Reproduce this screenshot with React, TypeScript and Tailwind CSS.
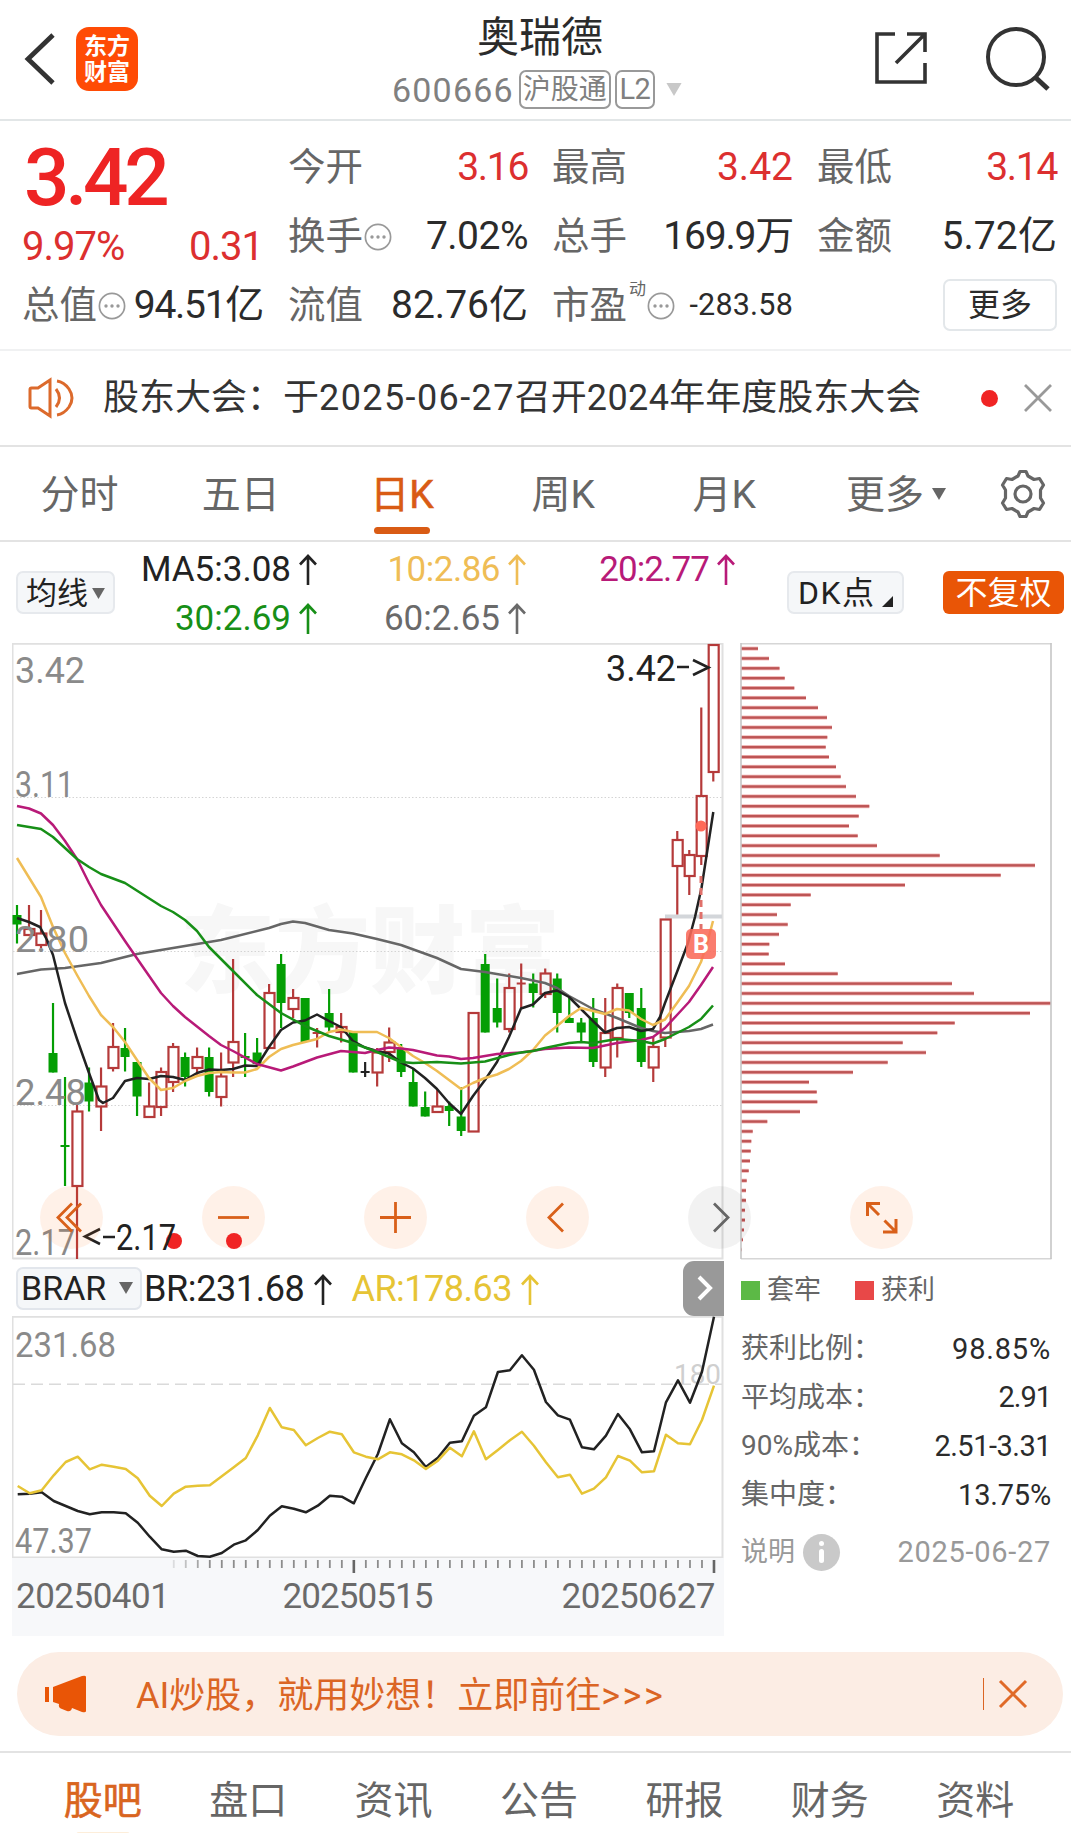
import React from "react";

type Candle = [kind: "r" | "g" | "k", high: number, top: number, bottom: number, low: number];

const STEP = 12.005;
const xAt = (i: number) => 17 + i * STEP;

const candles: Candle[] = [
  ["g", 905, 915, 924.5, 943.5], ["r", 905, 929, 935, 935], ["r", 910, 933.5, 945, 948],
  ["g", 1003, 1053, 1072.5, 1072.5], ["g", 1077, 1146, 1146, 1186], ["r", 1103, 1111.5, 1186, 1259],
  ["g", 1067.5, 1082.5, 1101.5, 1111.5], ["r", 1067.5, 1086.5, 1106.5, 1131], ["r", 1023, 1047, 1068, 1071.5],
  ["g", 1028, 1048, 1057, 1071.5], ["g", 1062, 1062, 1096.5, 1116], ["r", 1082.5, 1106.5, 1117, 1117],
  ["r", 1067.5, 1072, 1107, 1116], ["r", 1043, 1047, 1082, 1092], ["g", 1052.5, 1057, 1077, 1086.5],
  ["r", 1047.5, 1057, 1068, 1077], ["g", 1047.5, 1057, 1092, 1096.5], ["r", 1052.5, 1076.5, 1097, 1106.5],
  ["r", 959, 1042, 1062.5, 1077], ["g", 1033, 1057, 1057, 1077], ["g", 1038, 1052.5, 1064, 1067],
  ["r", 984, 993, 1048, 1048], ["g", 954, 964, 1003, 1028], ["r", 989, 998, 1009, 1018],
  ["g", 998, 998, 1042, 1042], ["r", 1028, 1033, 1033, 1047.5], ["g", 989, 1013, 1027.5, 1031.5],
  ["r", 1013, 1027, 1032, 1042.5], ["g", 1032, 1032, 1072.5, 1072.5], ["k", 1062, 1072, 1072, 1077],
  ["r", 1048, 1052.5, 1072.5, 1086.5], ["r", 1027.5, 1042.5, 1052, 1062], ["g", 1044, 1048, 1072, 1077],
  ["g", 1069, 1082, 1106.5, 1106.5], ["g", 1091.5, 1107, 1116.5, 1116.5], ["r", 1089, 1106.5, 1112, 1112],
  ["g", 1101.5, 1106, 1111, 1126], ["g", 1087, 1116.5, 1131, 1136], ["r", 1013, 1013, 1131.5, 1131.5],
  ["g", 954, 964, 1032.5, 1032.5], ["g", 978.5, 1008, 1022.5, 1027.5], ["r", 973.5, 988, 1029, 1032.5],
  ["r", 963.5, 983.5, 983.5, 1008], ["g", 973.5, 983.5, 993, 1007.5], ["r", 968.5, 973.5, 994, 998],
  ["g", 973.5, 978.5, 1013, 1032.5], ["g", 998, 1018, 1023, 1023], ["g", 1018, 1022.5, 1032.5, 1041],
  ["g", 998, 1018, 1062, 1067], ["r", 998, 1033, 1067.5, 1077], ["r", 983.5, 988, 1038, 1057.5],
  ["g", 993, 993, 1013, 1018], ["g", 988, 1008, 1062, 1067], ["r", 1037, 1047, 1067.5, 1082],
  ["r", 919.5, 919.5, 1037.5, 1047], ["r", 831, 840, 866, 914.5], ["r", 850, 855, 876, 895],
  ["r", 707.5, 796, 856, 865], ["r", 645, 645, 772, 781.5],
];

const ma5 = "17,918 29,922 40,927 47,940 53,955 65,1003 77,1039 89,1073 99,1100 103,1103 113,1098 125,1081 137,1078 149,1079 161,1076 173,1077 185,1080 197,1073 209,1069.5 221,1070 233,1069 245,1065.5 257,1066 269,1047 281,1030 293,1022.5 305,1020.5 317,1014.5 329,1021 341,1027 353,1041 365,1047.5 377,1051 389,1053.5 401,1062.5 413,1068.5 425,1078 437,1089 449,1103 461,1114 473,1096 485,1080 497,1062 509,1037 521,1008.5 533,1004.5 545,993 557,990.5 569,997 581,1009 593,1021 605,1032.5 617,1028 629,1027 641,1031 653,1029 660,1017 665,1003 677,972 688,943 695,917 701.5,888 713.3,812";
const ma10 = "17,858 41,897 53,927 65,953 77,975 89,996 101,1015 113,1027 125,1042 137,1060 149,1078 161,1090 173,1088 185,1081 197,1076 209,1073 221,1072 233,1072.5 245,1072.5 257,1069 269,1057 281,1049 293,1045 305,1042 317,1039 329,1032 341,1029.5 353,1032 377,1032 389,1038 401,1047 413,1056 425,1063 437,1071 461,1089 473,1083 485,1078 497,1074.5 509,1069 521,1061 533,1050 545,1035.5 557,1026 569,1016 581,1008 593,1011 605,1014 617,1009 629,1010.5 641,1019 653,1025 665,1019.5 677,1003 689,986 701,962 708,940 713,921";
const ma20 = "17,806 29,808.5 41,813.5 53,825 65,841 77,859 89,883 101,905 125,941 145,970 161,993 173,1006 185,1017 197,1026.5 209,1036 221,1045 233,1051 257,1064 281,1070.5 293,1066.5 305,1062 317,1057.5 341,1051 353,1052 365,1053 377,1050 389,1047.5 401,1048.5 413,1050 437,1055.5 449,1056.5 461,1059 473,1058 497,1054 521,1052.5 545,1049 569,1047.5 593,1048 617,1043 641,1040 653,1037 665,1028 677,1015 689,1002 701,985 713,967";
const ma30 = "17,825 41,829 53,837 65,848 77,859 89,867 101,874 125,883 161,906 173,912 185,920 197,931 209,947 233,971 257,995 281,1013 305,1026 329,1036 353,1043 377,1052 389,1057 401,1062 413,1063 437,1062 461,1063.5 485,1061.5 509,1055 521,1052.5 533,1051 545,1048 569,1043 581,1042 593,1043 605,1041 617,1039 641,1041 653,1043.5 665,1039 677,1033 689,1027 701,1019 713,1005.5";
const ma60 = "17,974 41,969.5 65,968 101,963 137,954 161,950 221,940 269,928 281,924 293,921.5 305,923 329,930 353,933.5 377,939 401,945 437,958 461,969 485,972 521,978 545,983 557,988 569,996 593,1009 617,1018 641,1028 653,1031 665,1033 689,1031 701,1029 713,1024.5";

const br = [1494.3, 1493.7, 1492.3, 1501, 1506, 1511, 1514.3, 1512.3, 1512.3, 1513.3, 1522.7, 1536.7, 1549.3, 1551.7, 1550.7, 1556, 1556.7, 1553, 1544.7, 1540.3, 1530, 1515.7, 1506.3, 1508.7, 1512.3, 1505.7, 1495.7, 1496.7, 1503.3, 1478, 1454, 1419.3, 1443.3, 1452.3, 1467, 1457.7, 1442.7, 1441.3, 1415.7, 1407.3, 1372, 1370.3, 1355.3, 1369.7, 1402, 1415.3, 1419.7, 1447.3, 1449.3, 1435.7, 1414, 1429.3, 1452.3, 1451.3, 1402.3, 1380.3, 1402.7, 1371.7, 1316.7];
const ar = [1486, 1493.3, 1490.3, 1475.3, 1462, 1456.7, 1469.3, 1464.7, 1466.7, 1469, 1478.3, 1495.7, 1506, 1493.7, 1486.7, 1485.7, 1485.3, 1476.3, 1467.3, 1458, 1435.3, 1408, 1427.3, 1430, 1445.3, 1438, 1431.7, 1434.3, 1452.3, 1456.7, 1459.3, 1452.3, 1454.3, 1460.3, 1469, 1460.7, 1447.7, 1456.3, 1431.3, 1459.3, 1450, 1440.3, 1431.7, 1445.7, 1462.3, 1477.3, 1474.7, 1493.7, 1488.7, 1477.3, 1456, 1460.7, 1472.3, 1471.3, 1434.7, 1443.3, 1444.3, 1420, 1385.7];

const chips = [17, 28, 38.5, 43.7, 53.3, 65, 77, 86, 91, 86.3, 84.7, 88, 95, 99.7, 105, 115, 128.3, 117.7, 108, 116.7, 136, 198.7, 294, 259.7, 164, 69.7, 49.7, 36, 46.7, 38, 28.3, 27.7, 44, 96.7, 211, 233, 310, 289, 213.7, 196.3, 161.7, 185, 146.7, 112, 68, 75.7, 76.3, 59, 26.3, 11.7, 10.3, 9.7, 9, 7.7, 5.7, 5, 5, 4, 4, 3, 2, 1];

const toPoints = (v: number[]) => v.map((y, i) => `${xAt(i) + 0.7},${y}`).join(" ");

const inkOf = { r: "#b53a3a", g: "#049e04", k: "#222222" };

function CandleMark({ c, i }: { c: Candle; i: number }) {
  const [kind, high, top, bottom, low] = c;
  const x = xAt(i);
  const ink = inkOf[kind];
  if (bottom - top < 1)
    return (
      <g stroke={ink} strokeWidth={2.2}>
        <path d={`M${x} ${high}V${low}M${x - 4.5} ${top}H${x + 4.5}`} />
      </g>
    );
  if (kind === "g")
    return (
      <g>
        <path d={`M${x} ${high}V${low}`} stroke={ink} strokeWidth={2.2} />
        <rect x={x - 4.5} y={top} width={9} height={bottom - top} fill={ink} />
      </g>
    );
  return (
    <g stroke={ink} strokeWidth={2.2} fill="none">
      <path d={`M${x} ${high}V${top}M${x} ${bottom}V${low}`} />
      <rect x={x - 4.6} y={top} width={10} height={bottom - top} />
    </g>
  );
}

function Label(p: { x: number; y: number; w: number; size: number; fill: string; children: string }) {
  return (
    <text x={p.x} y={p.y} fontSize={p.size} fill={p.fill} textLength={p.w} lengthAdjust="spacingAndGlyphs">
      {p.children}
    </text>
  );
}

function KChart() {
  return (
    <svg className="block h-[617px] w-[712px]" viewBox="12 643 712 617">
      <text x={180} y={986} fontSize={95} fontWeight={900} fill="#f7f7f7">东方财富</text>
      <path d="M12.5 1259V643.8H722.5V1258.5H12.5" fill="none" stroke="#e0e0e0" strokeWidth={2} />
      {[797.5, 951.5, 1105.5].map((y) => (
        <path key={y} d={`M13 ${y}H722`} stroke="#d4d4d4" strokeWidth={1} strokeDasharray="1.5 2" />
      ))}
      <path d="M665 916.5H722" stroke="#d3d6da" strokeWidth={4} />
      {candles.map((c, i) => (
        <CandleMark key={i} c={c} i={i} />
      ))}
      <g fill="none" strokeWidth={2.5} strokeLinejoin="round">
        <polyline points={ma60} stroke="#666" />
        <polyline points={ma5} stroke="#222" />
        <polyline points={ma10} stroke="#efbd55" />
        <polyline points={ma20} stroke="#b81a78" />
        <polyline points={ma30} stroke="#178f17" />
      </g>
      <Label x={15} y={682.5} w={70} size={37} fill="#8a8a8a">3.42</Label>
      <Label x={15} y={797} w={59} size={37} fill="#8a8a8a">3.11</Label>
      <Label x={15} y={951.5} w={74} size={37} fill="#8a8a8a">2.80</Label>
      <Label x={15} y={1105} w={71} size={37} fill="#8a8a8a">2.48</Label>
      <Label x={15} y={1255} w={60} size={37} fill="#8a8a8a">2.17</Label>
      <circle cx={701} cy={826} r={5.5} fill="#ff6a58" />
      <path d="M701 876V929" stroke="#e0706a" strokeWidth={3} strokeDasharray="7 5" />
      <rect x={686} y={929} width={30} height={30} rx={5} fill="#f96a5a" opacity={0.88} />
      <text x={701} y={953} textAnchor="middle" fontSize={25} fontWeight={700} fill="#fff">B</text>
      <g stroke="#222" strokeWidth={2.6} fill="none">
        <path d="M693 660L708.500 667.500L693 675M677 667H689" />
      </g>
      <Label x={606} y={681} w={70} size={36} fill="#222">3.42</Label>
      <circle cx={174} cy={1241} r={8} fill="#f02424" />
      <path d="M100 1229L85 1236.500L100 1244M103 1237H115" stroke="#222" strokeWidth={2.6} fill="none" />
      <Label x={116} y={1250} w={60} size={36} fill="#222">2.17</Label>
    </svg>
  );
}

function BrarChart() {
  return (
    <svg className="block h-[242px] w-[712px]" viewBox="12 1316 712 242">
      <path d="M12.5 1557.500V1316.800H722.500V1557.500Z" fill="none" stroke="#e0e0e0" strokeWidth={2} />
      <path d="M13 1384.300H722" stroke="#dadada" strokeWidth={1.6} strokeDasharray="12 6" />
      <Label x={15} y={1357} w={101} size={35} fill="#8a8a8a">231.68</Label>
      <Label x={15} y={1553} w={77} size={35} fill="#8a8a8a">47.37</Label>
      <Label x={674} y={1384} w={47} size={28} fill="#cfcfcf">180</Label>
      <g fill="none" strokeWidth={2.5} strokeLinejoin="round">
        <polyline points={toPoints(br)} stroke="#222" />
        <polyline points={toPoints(ar)} stroke="#e6c435" />
      </g>
    </svg>
  );
}

function DateAxis() {
  return (
    <div className="h-[78px] w-[712px] bg-[#f7f8fa]">
      <svg className="block h-4 w-[712px]" viewBox="12 1558 712 16">
        {Array.from({ length: 46 }, (_, k) => k + 13).map((i) => {
          const big = i === 28 || i === 58;
          return (
            <path
              key={i}
              d={`M${xAt(i) + 0.7} 1560V${big ? 1573 : 1568}`}
              stroke={big ? "#666" : "#8c8c8c"}
              strokeWidth={big ? 2.6 : 1.8}
              opacity={Math.min(1, (i - 12) / 4)}
            />
          );
        })}
      </svg>
      <div className="flex h-[44px] items-center justify-between pr-[9px] pl-[4px] text-[35px] tracking-[-0.5px] text-[#6a6a6a]">
        <span>20250401</span>
        <span className="mr-[16px] tracking-[-0.9px]">20250515</span>
        <span>20250627</span>
      </div>
    </div>
  );
}

function ChipChart() {
  return (
    <svg className="block h-[617px] w-[314px]" viewBox="739 643 314 617">
      {chips.map((w, i) => {
        const y = 648.6 + i * 9.853;
        return (
          <g key={i}>
            <rect x={741} y={y - 2} width={w} height={4} fill="#f3b9b9" />
            <rect x={741} y={y - 1.2} width={w} height={2.4} fill="#bd5555" />
          </g>
        );
      })}
      <path d="M741 643.800H1051.500M741 1258.800H1051.500" stroke="#d6d6d6" strokeWidth={1.6} />
      <path d="M741 643V1259M1051 643V1259" stroke="#c6c6c6" strokeWidth={1.6} />
    </svg>
  );
}

function Up() {
  return (
    <svg className="h-[31px] w-[18px]" viewBox="0 0 18 31" fill="none" stroke="currentColor" strokeWidth={2.6}>
      <path d="M9 31V2M1 10.500L9 2L17 10.500" />
    </svg>
  );
}

function Down({ className }: { className: string }) {
  return (
    <svg className={className} viewBox="0 0 14 12" fill="currentColor">
      <path d="M0 0H14L7 12Z" />
    </svg>
  );
}

function Dots() {
  return (
    <svg className="h-[28px] w-[28px]" viewBox="0 0 28 28" fill="none" stroke="#999" strokeWidth={1.7}>
      <circle cx={14} cy={14} r={12.6} />
      <g fill="#999" stroke="none">
        <circle cx={8} cy={14} r={1.7} />
        <circle cx={14} cy={14} r={1.7} />
        <circle cx={20} cy={14} r={1.7} />
      </g>
    </svg>
  );
}

function Stat({ label, value, red, dots, track = "tracking-[-0.5px]" }: { label: string; value: string; red?: boolean; dots?: boolean; track?: string }) {
  return (
    <div className="flex h-[69px] items-center justify-between">
      <span className="flex items-center gap-[1px] text-[37.500px] text-[#666]">
        {label}
        {dots && <Dots />}
      </span>
      <span className={"text-[39px] " + track + (red ? " text-[#dc2f2f]" : " text-[#2b2b2b]")}>{value}</span>
    </div>
  );
}

function Ma({ text, className }: { text: string; className: string }) {
  return (
    <div className={"flex w-[209px] items-center justify-end gap-[8px] text-[35px] " + className}>
      {text}
      <Up />
    </div>
  );
}

function RoundButton({ children, className }: { children: React.ReactNode; className: string }) {
  return (
    <div className={"absolute top-[543px] h-[63px] w-[63px] rounded-full " + className}>
      <svg className="h-full w-full" viewBox="0 0 63 63" fill="none" stroke="currentColor" strokeWidth={2.8}>
        {children}
      </svg>
    </div>
  );
}

const tabs = ["分时", "五日", "日K", "周K", "月K"];
const bottomTabs = ["股吧", "盘口", "资讯", "公告", "研报", "财务", "资料"];
const costRows = [
  ["获利比例：", "98.85%", "tracking-[0.8px]"],
  ["平均成本：", "2.91", "tracking-[-1px]"],
  ["90%成本：", "2.51-3.31", "tracking-[-0.5px]"],
  ["集中度：", "13.75%", "tracking-[-0.2px]"],
];

export default function App() {
  return (
    <div className="h-[1833px] w-[1071px] overflow-hidden bg-white font-[Roboto,'Noto_Sans_CJK_SC',sans-serif] leading-none whitespace-nowrap">
      <header className="flex h-[121px] items-start border-b-2 border-[#e2e6e7]">
        <svg className="mt-[32px] ml-[23px] h-[54px] w-[34px]" viewBox="0 0 34 54" fill="none" stroke="#333" strokeWidth={4.8}>
          <path d="M30 3L5 27L30 51" />
        </svg>
        <div className="mt-[27px] ml-[19px] flex h-[64px] w-[62px] flex-col items-center justify-center gap-[3px] rounded-[13px] bg-[#ff4b05] text-[23px] font-bold text-white">
          <span>东方</span>
          <span>财富</span>
        </div>
        <div className="ml-[247px] flex w-[310px] flex-col items-center">
          <div className="mt-[17px] text-[42px] text-[#2b2b2b]">奥瑞德</div>
          <div className="mt-[11px] flex h-[39px] items-center self-start text-[#808080]">
            <span className="ml-[7px] text-[34px] tracking-[1.2px]">600666</span>
            <span className="ml-[5px] flex h-[39px] w-[92px] items-center justify-center rounded-[7px] border-2 border-[#999] text-[28px]">沪股通</span>
            <span className="ml-[4px] flex h-[39px] w-[40px] items-center justify-center rounded-[7px] border-2 border-[#999] text-[29px] tracking-[-0.5px]">L2</span>
            <Down className="ml-[9px] h-[13px] w-[20px] text-[#c8c8c8]" />
          </div>
        </div>
        <svg className="mt-[30px] ml-[178px] h-[56px] w-[56px]" viewBox="0 0 56 56" fill="none" stroke="#333" strokeWidth={3.6}>
          <path d="M22 4H4V52H52V33M34 4H52V22M52 4L23 33" />
        </svg>
        <svg className="mt-[23px] ml-[56px] h-[70px] w-[70px]" viewBox="0 0 70 70" fill="none" stroke="#333" strokeWidth={4}>
          <circle cx={31} cy={34} r={28} />
          <path d="M50 54L63 66" strokeWidth={5} />
        </svg>
      </header>

      <section className="flex h-[230px] border-b-2 border-[#f0f1f2] pt-[12px]">
        <div className="ml-[22px] w-[241px]">
          <div className="flex h-[90px] items-center pl-[2px] text-[80px] font-medium tracking-[-4.3px] text-[#ee2424]">3.42</div>
          <div className="flex h-[48px] items-center justify-between text-[40px] tracking-[-1px] text-[#dc2f2f]">
            <span>9.97%</span>
            <span>0.31</span>
          </div>
          <Stat label="总值" value="94.51亿" dots track="tracking-[-1.3px]" />
        </div>
        <div className="ml-[25px] w-[240px]">
          <Stat label="今开" value="3.16" red track="tracking-[-1.3px]" />
          <Stat label="换手" value="7.02%" dots />
          <Stat label="流值" value="82.76亿" track="tracking-[0px]" />
        </div>
        <div className="ml-[24px] w-[241px]">
          <Stat label="最高" value="3.42" red track="tracking-[0px]" />
          <Stat label="总手" value="169.9万" track="tracking-[-1.2px]" />
          <div className="flex h-[69px] items-center justify-between">
            <span className="flex items-center text-[37.500px] text-[#666]">
              市盈
              <sup className="top-[2px] mr-[1px] ml-[2px] self-start text-[17px]">动</sup>
              <Dots />
            </span>
            <span className="text-[30.500px] tracking-[0.2px] text-[#2b2b2b]">-283.58</span>
          </div>
        </div>
        <div className="ml-[24px] w-[240px]">
          <Stat label="最低" value="3.14" red track="tracking-[-1.3px]" />
          <Stat label="金额" value="5.72亿" track="tracking-[0.1px]" />
          <div className="mt-[8px] ml-auto flex h-[52px] w-[114px] items-center justify-center rounded-[7px] border-2 border-[#e3e7ea] text-[32px] text-[#2b2b2b]">更多</div>
        </div>
      </section>

      <section className="flex h-[96px] items-center border-b-2 border-[#e3e3e3] pl-[27px]">
        <svg className="h-[42px] w-[50px]" viewBox="0 0 50 42" fill="none" stroke="#dc6a2c" strokeWidth={3}>
          <path d="M3 12.500Q3 11 4.500 11H11L23 3V39L11 31H4.500Q3 31 3 29.500ZM29 12Q36 21 29 30M30 4Q37 5 42 12Q48 21 42 30Q37 37 30 38" />
        </svg>
        <span className="ml-[26px] text-[36px] text-[#333]">股东大会：于<span className="tracking-[1.4px]">2025-06-27</span>召开<span className="tracking-[0.4px]">2024</span>年年度股东大会</span>
        <span className="ml-auto h-[17px] w-[17px] rounded-full bg-[#f02424]" />
        <svg className="mr-[18px] ml-[25px] h-[30px] w-[30px]" viewBox="0 0 30 30" stroke="#999" strokeWidth={2.8}>
          <path d="M2 2L28 28M28 2L2 28" />
        </svg>
      </section>

      <nav className="flex h-[95px] items-center border-b-2 border-[#e3e3e3] text-[39px] text-[#666]">
        {tabs.map((t, i) => (
          <div key={t} className={"relative flex h-full w-[161.200px] items-center justify-center pt-[3px] pr-[2px] " + (i === 2 ? "text-[#d95b14] [-webkit-text-stroke:0.6px]" : "")}>
            {t}
            {i === 2 && <span className="absolute bottom-[6px] h-[7px] w-[56px] rounded-full bg-[#d95b14]" />}
          </div>
        ))}
        <div className="flex items-center gap-[8px] pt-[3px] pl-[40px]">
          更多
          <Down className="mb-[3px] h-[12px] w-[14px]" />
        </div>
        <svg className="mr-[23px] ml-auto h-[50px] w-[50px]" viewBox="0 0 50 50" fill="none" stroke="#666" strokeWidth={3.2} strokeLinejoin="round">
          <path d="M20 7L22 2.500H28L30 7L36 10.500L41.500 9.500L45.500 16L42.500 21V29L45.500 34L41.500 40.500L36 39.500L30 43L28 47.500H22L20 43L14 39.500L8.500 40.500L4.500 34L7.500 29V21L4.500 16L8.500 9.500L14 10.500Z" />
          <circle cx={25} cy={25} r={8} />
        </svg>
      </nav>

      <section className="flex h-[101px] items-start">
        <div className="mt-[29px] ml-[16px] flex h-[43px] w-[99px] items-center justify-center gap-[4px] rounded-[7px] border-2 border-[#e6e9ed] bg-[#f5f7f9] pt-[1px] text-[31px] text-[#222]">
          均线
          <Down className="h-[11px] w-[13px] text-[#666]" />
        </div>
        <div className="mt-[3px] -ml-[7px] grid grid-cols-3 [grid-auto-rows:49px]">
          <Ma text="MA5:3.08" className="tracking-[0px] text-[#222]" />
          <Ma text="10:2.86" className="tracking-[-0.500px] text-[#efbd55]" />
          <Ma text="20:2.77" className="tracking-[-0.900px] text-[#b81a78]" />
          <Ma text="30:2.69" className="tracking-[0px] text-[#178f17]" />
          <Ma text="60:2.65" className="tracking-[0px] text-[#6a6a6a]" />
        </div>
        <div className="mt-[29px] ml-auto flex h-[43px] w-[117px] items-center rounded-[7px] border-2 border-[#e6e9ed] bg-[#f5f7f9] pt-[1px] pl-[9px] text-[32px] text-[#222]">
          <span className="tracking-[1.500px]">DK</span>点
          <svg className="mt-[17px] ml-[8px] h-[11px] w-[11px]" viewBox="0 0 10 10">
            <path d="M10 0V10H0Z" fill="#222" />
          </svg>
        </div>
        <div className="mt-[29px] mr-[7px] ml-[39px] flex h-[43px] w-[121px] items-center justify-center rounded-[6px] bg-[#e95506] text-[32px] text-white">不复权</div>
      </section>

      <section className="relative flex h-[993px]">
        <div className="ml-[12px] w-[712px]">
          <KChart />
          <div className="flex h-[56px] items-center text-[35px]">
            <div className="ml-[4px] flex h-[43px] w-[126px] items-center justify-between rounded-[7px] border-2 border-[#e2e6ec] bg-[#f5f7f9] pr-[7px] pl-[3px] text-[34px] tracking-[0px] text-[#222]">
              BRAR
              <Down className="h-[12px] w-[14px] text-[#666]" />
            </div>
            <div className="ml-[2px] flex items-center gap-[10px] pt-[2px] text-[36px] tracking-[-0.4px] text-[#222]">
              BR:231.68 <Up />
            </div>
            <div className="ml-[19px] flex items-center gap-[9px] pt-[2px] text-[36px] tracking-[-0.5px] text-[#e6c435]">
              AR:178.63 <Up />
            </div>
            <div className="ml-auto flex h-[55px] w-[41px] items-center justify-center rounded-l-[11px] bg-[#999]">
              <svg className="h-[26px] w-[18px]" viewBox="0 0 18 26" fill="none" stroke="#fff" strokeWidth={4}>
                <path d="M4 2L15 13L4 24" />
              </svg>
            </div>
          </div>
          <BrarChart />
          <DateAxis />
        </div>
        <div className="ml-[15px] w-[314px]">
          <ChipChart />
          <div className="ml-[2px] w-[310px] text-[27px] text-[#666]">
            <div className="flex h-[60px] items-center">
              <span className="h-[19px] w-[19px] bg-[#5cb946]" />
              <span className="ml-[7px]">套牢</span>
              <span className="ml-[34px] h-[19px] w-[19px] bg-[#e84848]" />
              <span className="ml-[7px]">获利</span>
            </div>
            <div className="pt-[5px]">
              {costRows.map(([k, v, t]) => (
                <div key={k} className="flex h-[48.600px] items-center justify-between">
                  <span className="text-[28px]">{k}</span>
                  <span className={"text-[29px] text-[#2b2b2b] " + t}>{v}</span>
                </div>
              ))}
            </div>
            <div className="flex h-[66px] items-center text-[#999]">
              <span>说明</span>
              <span className="ml-[8px] flex h-[37px] w-[37px] flex-col items-center justify-center gap-[3px] rounded-full bg-[#c9c9c9]">
                <span className="h-[5px] w-[5px] rounded-full bg-white" />
                <span className="h-[14px] w-[5px] rounded-full bg-white" />
              </span>
              <span className="ml-auto text-[29px] tracking-[0.7px]">2025-06-27</span>
            </div>
          </div>
        </div>

        <RoundButton className="left-[40px] bg-[#ff6600]/9 text-[#d9601a]">
          <path d="M32 17.500L18 31.500L32 45.500M41 17.500L27 31.500L41 45.500" />
        </RoundButton>
        <RoundButton className="left-[202px] bg-[#ff6600]/9 text-[#d9601a]">
          <path d="M16 31.500H47" />
        </RoundButton>
        <span className="absolute top-[590px] left-[226px] h-[16px] w-[16px] rounded-full bg-[#f02424]" />
        <RoundButton className="left-[364px] bg-[#ff6600]/9 text-[#d9601a]">
          <path d="M16 31.500H47M31.500 16V47" />
        </RoundButton>
        <RoundButton className="left-[526px] bg-[#ff6600]/9 text-[#d9601a]">
          <path d="M37 17.500L23 31.500L37 45.500" />
        </RoundButton>
        <RoundButton className="left-[688px] bg-black/5 text-[#666]">
          <path d="M26 17.500L40 31.500L26 45.500" />
        </RoundButton>
        <RoundButton className="left-[850px] bg-[#ff6600]/9 text-[#d9601a]">
          <path d="M17.500 30V17.500H30M17.500 17.500L29 29M46 33V46H33M46 46L34.500 34.500" strokeWidth={3} />
        </RoundButton>
      </section>

      <section className="mt-[16px] mr-[8px] ml-[17px] flex h-[84px] items-center rounded-full bg-[#fcede4] text-[#db6524]">
        <svg className="ml-[28px] h-[38px] w-[42px]" viewBox="0 0 42 38" fill="#e95506">
          <path d="M0 12H4V27H0ZM8 12L37 1Q41 0 41 2V36Q41 38 37 37L27 33Q26 37 22 36L17 34Q13 33 14 29L8 27Z" />
        </svg>
        <span className="ml-[49px] pt-[3px] text-[36px]">AI炒股，就用妙想！立即前往<span className="tracking-[2.500px]">&gt;&gt;&gt;</span></span>
        <span className="ml-auto h-[32px] w-[1.500px] bg-[#db6524]" />
        <svg className="mr-[35px] ml-[14px] h-[30px] w-[30px]" viewBox="0 0 30 30" stroke="#e06a28" strokeWidth={3}>
          <path d="M2 2L28 28M28 2L2 28" />
        </svg>
      </section>

      <nav className="mt-[15px] flex h-[82px] border-t-2 border-[#e3e3e3] pr-[23px] pl-[30px] text-[39px] text-[#666]">
        {bottomTabs.map((t, i) => (
          <div key={t} className={"relative flex h-[97px] flex-1 items-center justify-center " + (i === 0 ? "text-[#d9651f] [-webkit-text-stroke:0.6px]" : "")}>
            {t}
            {i === 0 && <span className="absolute top-[79px] h-[6px] w-[54px] rounded-full bg-[#fdeeda]" />}
          </div>
        ))}
      </nav>
    </div>
  );
}
